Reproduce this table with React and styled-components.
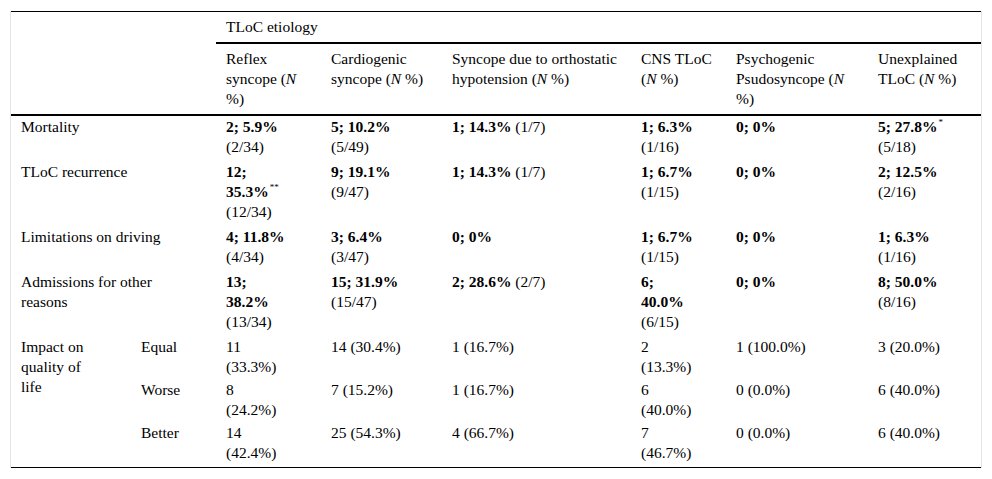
import styled, { createGlobalStyle } from "styled-components";

const serif = `"Liberation Serif", "Times New Roman", Times, serif`;

const GlobalStyle = createGlobalStyle`
  body {
    margin: 0;
    background: #fff;
    color: #000;
    font-family: ${serif};
  }
`;

const Frame = styled.div`
  margin: 11px 0 0 10px;
  width: 970px;
  border-left: 1px solid #e4e4e4;
  border-right: 1px solid #e4e4e4;
`;

const Table = styled.table`
  width: 970px;
  table-layout: fixed;
  border-collapse: collapse;
  border-top: 1px solid #000;
  border-bottom: 1px solid #000;
  font-family: ${serif};
  font-size: 15.5px;
  line-height: 20px;
  color: #000;
`;

const Head = styled.th`
  font-family: ${serif};
  font-size: 15.5px;
  font-weight: normal;
  text-align: left;
  vertical-align: top;
  padding: 5px 10px;
  border-bottom: ${(p) => (p.$rule ? "2px solid #000" : "none")};
`;

const Cell = styled.td`
  font-family: ${serif};
  font-size: 15.5px;
  text-align: left;
  vertical-align: top;
  padding: 1px 10px ${(p) => p.$pb}px 10px;
`;

const B = styled.strong`
  font-family: ${serif};
  font-weight: bold;
`;

const Mark = styled.sup`
  font-size: 9px;
  line-height: 0;
  vertical-align: 7px;
  margin-left: 1px;
`;

const N = () => <i>N</i>;

const colWidths = [120, 85, 105, 121, 189, 95, 142, 113];

const headers = [
  <>Reflex syncope (<N /> %)</>,
  <>Cardiogenic syncope (<N /> %)</>,
  <>Syncope due to orthostatic hypotension (<N /> %)</>,
  <>CNS TLoC (<N /> %)</>,
  <>Psychogenic Psudosyncope (<N /> %)</>,
  <>Unexplained TLoC (<N /> %)</>,
];

const mainRows = [
  {
    label: "Mortality",
    cells: [
      <><B>2; 5.9%</B><br />(2/34)</>,
      <><B>5; 10.2%</B><br />(5/49)</>,
      <><B>1; 14.3%</B> (1/7)</>,
      <><B>1; 6.3%</B><br />(1/16)</>,
      <B>0; 0%</B>,
      <><B>5; 27.8%</B><Mark>*</Mark><br />(5/18)</>,
    ],
  },
  {
    label: "TLoC recurrence",
    cells: [
      <><B>12;</B><br /><B>35.3%</B><Mark>**</Mark><br />(12/34)</>,
      <><B>9; 19.1%</B><br />(9/47)</>,
      <><B>1; 14.3%</B> (1/7)</>,
      <><B>1; 6.7%</B><br />(1/15)</>,
      <B>0; 0%</B>,
      <><B>2; 12.5%</B><br />(2/16)</>,
    ],
  },
  {
    label: "Limitations on driving",
    cells: [
      <><B>4; 11.8%</B><br />(4/34)</>,
      <><B>3; 6.4%</B><br />(3/47)</>,
      <B>0; 0%</B>,
      <><B>1; 6.7%</B><br />(1/15)</>,
      <B>0; 0%</B>,
      <><B>1; 6.3%</B><br />(1/16)</>,
    ],
  },
  {
    label: <>Admissions for other<br />reasons</>,
    cells: [
      <><B>13;</B><br /><B>38.2%</B><br />(13/34)</>,
      <><B>15; 31.9%</B><br />(15/47)</>,
      <><B>2; 28.6%</B> (2/7)</>,
      <><B>6;</B><br /><B>40.0%</B><br />(6/15)</>,
      <B>0; 0%</B>,
      <><B>8; 50.0%</B><br />(8/16)</>,
    ],
  },
];

const qualityRows = [
  {
    label: "Equal",
    cells: [
      <>11<br />(33.3%)</>,
      "14 (30.4%)",
      "1 (16.7%)",
      <>2<br />(13.3%)</>,
      "1 (100.0%)",
      "3 (20.0%)",
    ],
  },
  {
    label: "Worse",
    cells: [
      <>8<br />(24.2%)</>,
      "7 (15.2%)",
      "1 (16.7%)",
      <>6<br />(40.0%)</>,
      "0 (0.0%)",
      "6 (40.0%)",
    ],
  },
  {
    label: "Better",
    cells: [
      <>14<br />(42.4%)</>,
      "25 (54.3%)",
      "4 (66.7%)",
      <>7<br />(46.7%)</>,
      "0 (0.0%)",
      "6 (40.0%)",
    ],
  },
];

const App = () => {
  return (
    <>
      <GlobalStyle />
      <Frame>
        <Table>
          <colgroup>
            {colWidths.map((w, i) => (
              <col key={i} style={{ width: w }} />
            ))}
          </colgroup>
          <thead>
            <tr>
              <Head colSpan={2} rowSpan={2} $rule />
              <Head colSpan={6} $rule>
                TLoC etiology
              </Head>
            </tr>
            <tr>
              {headers.map((h, i) => (
                <Head key={i} $rule>
                  {h}
                </Head>
              ))}
            </tr>
          </thead>
          <tbody>
            {mainRows.map((row, r) => (
              <tr key={r}>
                <Cell colSpan={2} $pb={4}>
                  {row.label}
                </Cell>
                {row.cells.map((c, i) => (
                  <Cell key={i} $pb={4}>
                    {c}
                  </Cell>
                ))}
              </tr>
            ))}
            {qualityRows.map((row, r) => {
              const pb = r === qualityRows.length - 1 ? 4 : 2;
              return (
                <tr key={r}>
                  {r === 0 && (
                    <Cell rowSpan={3} $pb={4}>
                      Impact on
                      <br />
                      quality of
                      <br />
                      life
                    </Cell>
                  )}
                  <Cell $pb={pb}>{row.label}</Cell>
                  {row.cells.map((c, i) => (
                    <Cell key={i} $pb={pb}>
                      {c}
                    </Cell>
                  ))}
                </tr>
              );
            })}
          </tbody>
        </Table>
      </Frame>
    </>
  );
};

export default App;
